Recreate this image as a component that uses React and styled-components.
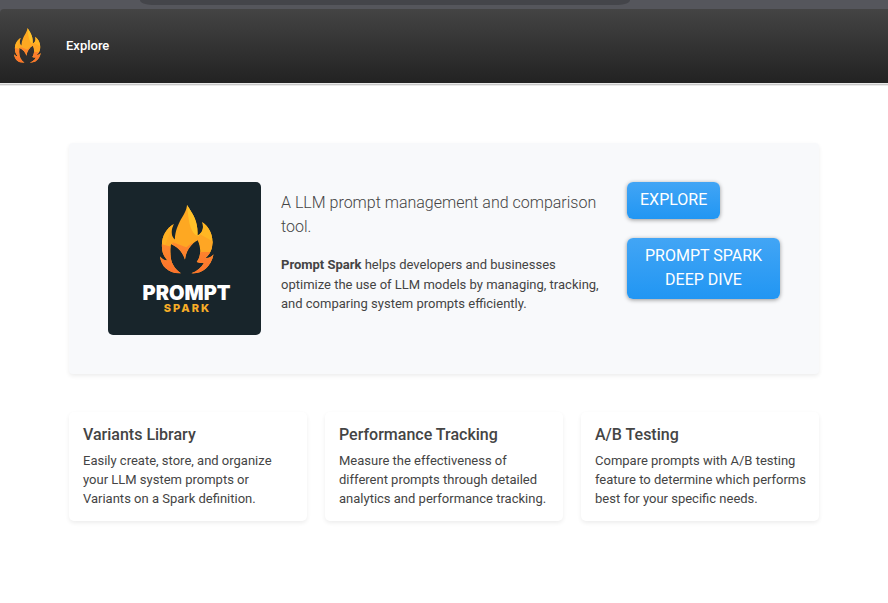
import React from "react";
import styled, { createGlobalStyle } from "styled-components";

const GlobalStyle = createGlobalStyle`
  *, *::before, *::after { box-sizing: border-box; }
  body {
    margin: 0;
    background: #fff;
    color: #444;
    font: 400 13px/1.5 Roboto, "Liberation Sans", sans-serif;
  }
  h2, p { margin: 0; }
`;

const WindowStrip = styled.div`
  height: 9px;
  padding: 0 258px 0 140px;
  background: #55565c;
`;

const AddressField = styled.div`
  height: 5px;
  background: #44454a;
  border-radius: 0 0 12px 12px / 0 0 5px 5px;
`;

const HeaderBack = styled.div`
  background: #55565c;
`;

const Header = styled.header`
  display: flex;
  align-items: center;
  gap: 25px;
  height: 74px;
  padding: 0 14px;
  background: linear-gradient(#444, #222);
  border-top-left-radius: 4px;
`;

const HeaderEdge = styled.div`
  height: 3px;
  background: #c8c8c8;
  border-top: 1px solid #e9e9e9;
  border-bottom: 1px solid #ebebeb;
`;

const BrandLink = styled.a`
  display: flex;
  padding-bottom: 2px;
`;

const NavLink = styled.a`
  color: #fff;
  font-weight: 500;
  text-decoration: none;
`;

const FlameSvg = styled.svg`
  display: block;
  width: ${(p) => p.$width}px;
  height: ${(p) => p.$height}px;
`;

const Main = styled.main`
  max-width: 790px;
  margin: 0 auto;
  padding: 57px 20px;
`;

const Hero = styled.section`
  padding: 39px;
  background: #f8f9fb;
  border-radius: 4px;
  box-shadow: 0 2px 4px rgba(0, 0, 0, 0.075);
`;

const HeroRow = styled.div`
  display: flex;
  align-items: flex-start;
  margin: 0 -10px;
`;

const HeroColumn = styled.div`
  flex: 0 0 ${(p) => p.$share}%;
  min-width: 0;
  padding: 0 10px;
`;

const HeroText = styled(HeroColumn)`
  padding-top: 9px;
`;

const HeroActions = styled(HeroColumn)`
  display: flex;
  flex-direction: column;
  align-items: flex-start;
  gap: 19px;
`;

const LogoTile = styled.div`
  display: flex;
  flex-direction: column;
  align-items: center;
  height: 153px;
  padding: 23px 0 0 4px;
  background: #18252b;
  border-radius: 5px;
`;

const LogoName = styled.div`
  margin-top: 9px;
  color: #fff;
  font: 900 20px/20px Inter, sans-serif;
`;

const LogoSub = styled.div`
  padding-left: 2px;
  color: #f8ae27;
  font: 800 11px/11px Inter, sans-serif;
  letter-spacing: 2px;
`;

const Lead = styled.p`
  margin-bottom: 16px;
  font-size: 16px;
  font-weight: 300;
  line-height: 24px;
`;

const Button = styled.button`
  padding: 6px 13px 7px;
  border: 0;
  border-radius: 6px;
  background: linear-gradient(#42a5f5, #2196f3);
  box-shadow: 0 1px 4px rgba(0, 0, 0, 0.4);
  color: #fff;
  font: 400 16px/24px Roboto, "Liberation Sans", sans-serif;
  text-transform: uppercase;
  cursor: pointer;
`;

const Features = styled.section`
  display: grid;
  grid-template-columns: repeat(3, 1fr);
  gap: 18px;
  margin-top: 38px;
`;

const Card = styled.article`
  padding: 13px 12px 13px 14px;
  background: #fff;
  border-radius: 5px;
  box-shadow: 0 2px 4px rgba(0, 0, 0, 0.075);
`;

const CardTitle = styled.h2`
  margin-bottom: 7px;
  font-size: 16px;
  font-weight: 500;
  line-height: 19px;
`;

const CardText = styled.p`
  line-height: 19px;
`;

const features = [
  {
    title: "Variants Library",
    text: "Easily create, store, and organize your LLM system prompts or Variants on a Spark definition.",
  },
  {
    title: "Performance Tracking",
    text: "Measure the effectiveness of different prompts through detailed analytics and performance tracking.",
  },
  {
    title: "A/B Testing",
    text: "Compare prompts with A/B testing feature to determine which performs best for your specific needs.",
  },
];

const flamePath =
  "M260 92C258 122 227 142 224 195C219 190 215 184 215 176C214 166 217 158 221 149C197 163 183 189 186 221C187 237 194 249 203 258C194 258 185 253 180 246C184 277 207 298 242 296C222 282 211 263 211 237C210 226 211 216 213 209C236 219 248 235 254 255C257 229 271 208 292 197C302 221 302 244 289 262C296 265 303 266 310 265C303 279 290 289 273 296C302 298 330 280 339 239C331 248 325 251 315 250C326 240 334 229 335 211C338 182 326 158 305 143C310 158 308 175 291 183C293 143 281 124 260 92Z";

function Flame({ id, width, height }) {
  const clip = `${id}-clip`;
  const shade = `${id}-shade`;
  return (
    <FlameSvg $width={width} $height={height} viewBox="180 92 160 206" preserveAspectRatio="none" aria-hidden="true">
      <defs>
        <clipPath id={clip}>
          <path d={flamePath} />
        </clipPath>
        <linearGradient id={shade} x1="0" y1="0" x2="0" y2="1">
          <stop offset="0" stopColor="#ff8b2d" />
          <stop offset="1" stopColor="#fb6f2c" />
        </linearGradient>
      </defs>
      <g clipPath={`url(#${clip})`}>
        <rect x="175" y="88" width="170" height="215" fill="#fea822" />
        <path d="M260 88L296 120V187L284 180C268 165 265 140 260 92Z" fill="#ffc229" />
        <path d="M300 140L345 170V205C325 211 309 206 296 190Z" fill="#ffb723" />
        <path d="M222 145L195 212L175 207V170Z" fill="#ffb023" />
        <path d="M175 206L213 217L218 203L258 218L275 205L292 232H345V303H175Z" fill={`url(#${shade})`} />
        <path d="M275 205L292 196L305 232H345V205L300 180Z" fill="#fea624" />
      </g>
    </FlameSvg>
  );
}

export default function App() {
  return (
    <>
      <GlobalStyle />
      <WindowStrip>
        <AddressField />
      </WindowStrip>
      <HeaderBack>
        <Header>
          <BrandLink href="#" aria-label="Prompt Spark">
            <Flame id="brand" width={27} height={35} />
          </BrandLink>
          <nav>
            <NavLink href="#explore">Explore</NavLink>
          </nav>
        </Header>
      </HeaderBack>
      <HeaderEdge />
      <Main>
        <Hero>
          <HeroRow>
            <HeroColumn $share={25}>
              <LogoTile>
                <Flame id="logo" width={54} height={69} />
                <LogoName>PROMPT</LogoName>
                <LogoSub>SPARK</LogoSub>
              </LogoTile>
            </HeroColumn>
            <HeroText $share={50}>
              <Lead>A LLM prompt management and comparison tool.</Lead>
              <p>
                <strong>Prompt Spark</strong> helps developers and businesses optimize the use of LLM models by
                managing, tracking, and comparing system prompts efficiently.
              </p>
            </HeroText>
            <HeroActions $share={25}>
              <Button type="button">Explore</Button>
              <Button type="button">Prompt Spark Deep Dive</Button>
            </HeroActions>
          </HeroRow>
        </Hero>
        <Features>
          {features.map((f) => (
            <Card key={f.title}>
              <CardTitle>{f.title}</CardTitle>
              <CardText>{f.text}</CardText>
            </Card>
          ))}
        </Features>
      </Main>
    </>
  );
}
